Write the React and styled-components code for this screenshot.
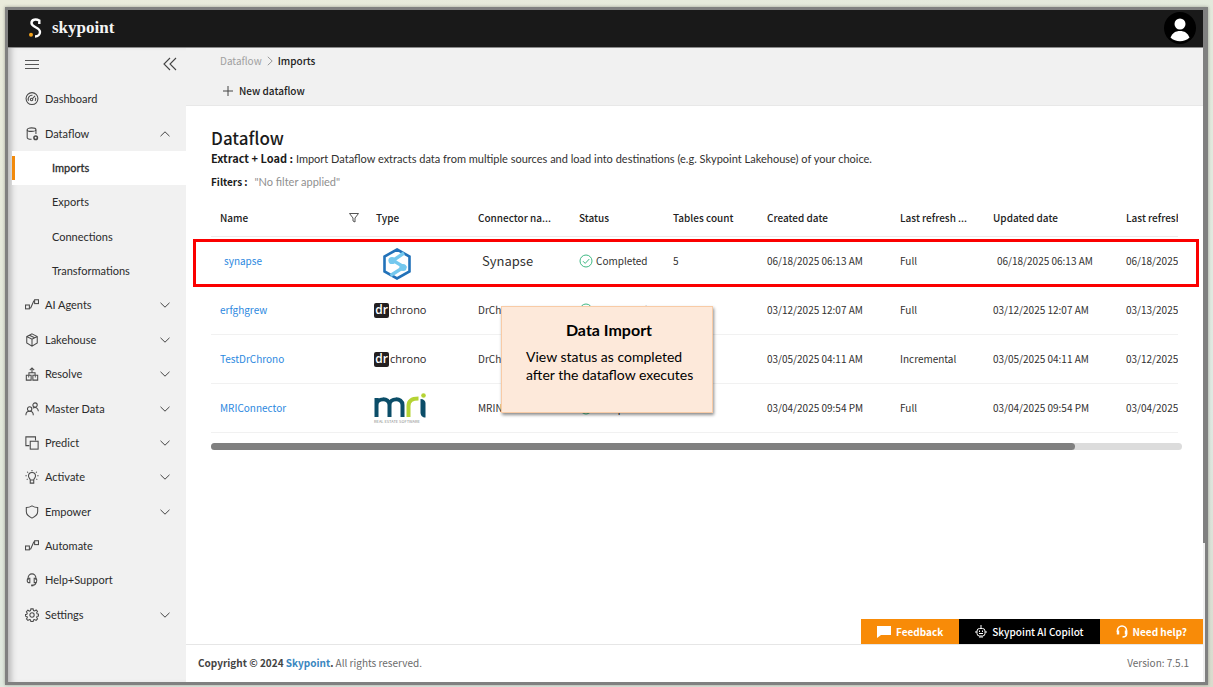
import React from "react";
import styled, { createGlobalStyle } from "styled-components";

const sans = `"Noto Sans CJK SC", "Open Sans", sans-serif`;
const humanist = `Lato, "Open Sans", sans-serif`;

const Global = createGlobalStyle`
  *, *::before, *::after { box-sizing: border-box; }
  body {
    margin: 0;
    background: linear-gradient(160deg, #eaebdb 0%, #e2e9dc 45%, #dfe9e2 75%, #d9dccd 100%);
    font-family: ${sans};
    font-size: 10px;
    line-height: 16px;
    color: #323130;
  }
  a { text-decoration: none; color: inherit; }
  button { font: inherit; color: inherit; border: 0; background: none; padding: 0; }
`;

const Page = styled.div`
  min-height: 100vh;
  display: flex;
  padding: 7px 5px 2px;
`;

const Frame = styled.div`
  flex: 1;
  min-width: 0;
  display: flex;
  flex-direction: column;
  border: 3px solid #808080;
  background: #fff;
  box-shadow: 0 0 3px rgba(90, 90, 80, 0.5);
`;

const Header = styled.header`
  display: flex;
  align-items: center;
  justify-content: space-between;
  height: 38px;
  padding: 0 7px 2px 20px;
  background: #191919;
  border-right: 2px solid #808080;
  border-bottom: 1px solid #8b8b8b;
`;

const Brand = styled.a`
  display: flex;
  align-items: center;
  gap: 10px;
  color: #f4f4f4;
  font-family: "Liberation Serif", serif;
  font-size: 17px;
  font-weight: 700;
  line-height: 24px;
`;

const Avatar = styled.button`
  width: 32px;
  height: 32px;
  border-radius: 50%;
  background: #000;
  svg { display: block; }
`;

const Body = styled.div`
  flex: 1;
  display: flex;
  min-height: 0;
`;

const Sidebar = styled.aside`
  flex: 0 0 178px;
  display: flex;
  flex-direction: column;
  padding-bottom: 50px;
  background: #f1f1f1;
  box-shadow: inset 7px 0 6px -4px #b5b5b5;
`;

const SidebarTop = styled.div`
  display: flex;
  align-items: center;
  justify-content: space-between;
  height: 34px;
  padding: 0 9px 2px 17px;
  svg { display: block; }
`;

const Nav = styled.ul`
  flex: 1;
  display: flex;
  flex-direction: column;
  margin: 0;
  padding: 0;
  list-style: none;
`;

const NavItem = styled.li`
  flex: 1;
  display: flex;
`;

const NavLink = styled.a`
  flex: 1;
  display: flex;
  align-items: center;
  gap: 6px;
  padding: 0 16px 0 ${(p) => (p.$sub ? "40px" : "13px")};
  margin-left: 4px;
  font-family: ${humanist};
  font-size: 11px;
  color: #2b2b2b;
  background: ${(p) => (p.$active ? "linear-gradient(#f28a0b, #f28a0b) 0 50% / 3px 24px no-repeat #fff" : "transparent")};
  -webkit-text-stroke: ${(p) => (p.$active ? "0.3px #2b2b2b" : "0")};
`;

const NavText = styled.span`
  flex: 1;
`;

const Content = styled.main`
  flex: 1;
  min-width: 0;
  display: flex;
  flex-direction: column;
`;

const PageRail = styled.div`
  flex: 0 0 2px;
  background: #efefef;
`;

const PageThumb = styled.div`
  height: 78%;
  background: #808080;
`;

const CommandBar = styled.div`
  display: flex;
  flex-direction: column;
  gap: 14px;
  height: 58px;
  padding: 5px 34px 0;
  background: #f1f1f1;
  border-bottom: 1px solid #e8e8e8;
`;

const Crumbs = styled.nav`
  display: flex;
  align-items: center;
  gap: 5px;
  color: #a0a0a0;
  b { color: #222; font-weight: 500; }
`;

const NewButton = styled.button`
  display: flex;
  align-items: center;
  align-self: flex-start;
  gap: 6px;
  padding-left: 3px;
  color: #222;
  font-weight: 500;
`;

const Section = styled.section`
  flex: 1;
  padding: 20px 21px 0 25px;
`;

const Title = styled.h1`
  margin: 0;
  font-size: 17px;
  font-weight: 500;
  line-height: 24px;
  color: #1b1b1b;
`;

const Line = styled.p`
  margin: 0 0 7px;
  font-family: ${humanist};
  font-size: 11px;
  b { font-family: ${sans}; font-size: ${(p) => (p.$lead ? "11px" : "10px")}; font-weight: 700; color: #1b1b1b; }
  span { margin-left: 4px; color: #8f8f8f; }
`;

const TableArea = styled.div`
  position: relative;
`;

const TableClip = styled.div`
  overflow: hidden;
  margin-right: 4px;
`;

const Table = styled.table`
  table-layout: fixed;
  width: 1087px;
  border-collapse: separate;
  border-spacing: 0;
`;

const Th = styled.th`
  height: 40px;
  padding: 2px 8px 0 9px;
  text-align: left;
  font-weight: 500;
  color: #222;
  white-space: nowrap;
  border-bottom: 1px solid #ececec;
`;

const ThInner = styled.div`
  display: flex;
  align-items: center;
  justify-content: space-between;
`;

const Td = styled.td`
  height: 49px;
  padding: 0 0 0 ${(p) => (p.$indent ? "13px" : "9px")};
  border-bottom: 1px solid #f1f1f1;
  white-space: nowrap;
  font-size: ${(p) => (p.$large ? "13px" : "10px")};
  svg { display: block; }
`;

const TypeCell = styled(Td)`
  padding: ${(p) => (p.$indent ? "5px 0 0 14px" : "0 0 0 7px")};
`;

const RowLink = styled.a`
  color: #2b88e0;
`;

const Status = styled.span`
  display: flex;
  align-items: center;
  gap: 3px;
`;

const Chrono = styled.span`
  display: flex;
  align-items: center;
  gap: 1px;
  font-family: "Open Sans", sans-serif;
  font-size: 11px;
  color: #2a2627;
`;

const ChronoMark = styled.span`
  width: 15px;
  height: 15px;
  border-radius: 2px;
  background: #231f20;
  color: #fff;
  font-size: 12px;
  font-weight: 600;
  line-height: 14px;
  text-align: center;
`;

const MriMark = styled.span`
  display: flex;
  flex-direction: column;
  font-size: 4px;
  line-height: 6px;
  color: #8a8a8a;
`;

const Track = styled.div`
  height: 7px;
  margin-top: 10px;
  border-radius: 4px;
  background: #dcdcdc;
`;

const Thumb = styled.div`
  width: 89%;
  height: 7px;
  border-radius: 4px;
  background: #808080;
`;

const Highlight = styled.div`
  position: absolute;
  top: 42px;
  left: -18px;
  right: -17px;
  height: 48px;
  border: 3px solid #fb0000;
  pointer-events: none;
`;

const Callout = styled.aside`
  position: absolute;
  top: 109px;
  left: 290px;
  width: 212px;
  height: 107px;
  padding: 14px 16px 0 24px;
  border: 1px solid #f8cba6;
  background: #fde9da;
  box-shadow: 1px 2px 3px rgba(0, 0, 0, 0.45);
  color: #000;
  font-family: Lato, sans-serif;
  font-size: 14px;
  line-height: 18px;
  h2 { margin: 0 4px 9px 0; font-size: 16px; line-height: 18px; font-weight: 700; text-align: center; }
  p { margin: 0; }
`;

const Actions = styled.div`
  display: flex;
  justify-content: flex-end;
`;

const Action = styled.button`
  display: flex;
  align-items: center;
  gap: 5px;
  height: 25px;
  padding: 0 16px;
  color: #fff;
  font-weight: ${(p) => (p.$dark ? 500 : 700)};
  background: ${(p) => (p.$dark ? "#000" : "#f88b08")};
`;

const Footer = styled.footer`
  display: flex;
  align-items: center;
  justify-content: space-between;
  height: 38px;
  padding: 0 14px 2px 12px;
  border-top: 1px solid #e6e6e6;
  color: #6b6b6b;
  b { color: #444; }
  a { color: #3a87c0; }
`;

const Svg = ({ size = 14, children, w = 1.2 }) => (
  <svg width={size} height={size} viewBox="0 0 16 16" fill="none" stroke="#4a4a4a" strokeWidth={w} aria-hidden="true">
    {children}
  </svg>
);

const flow = (
  <>
    <rect x=".6" y="8" width="4.400" height="4.400" />
    <rect x="11" y="2" width="4.400" height="4.400" />
    <path d="M5 11.500h1.500l3.500-8h1" />
  </>
);

const icons = {
  dashboard: (
    <>
      <circle cx="8" cy="7.5" r="6.8" />
      <circle cx="7.5" cy="8.6" r="1.4" />
      <path d="M8.5 7.6 11.5 4.4M4 10a4.4 4.4 0 0 1 4.6-6.2M12 6.6a4.4 4.4 0 0 1-.4 3.6" />
    </>
  ),
  data: (
    <>
      <ellipse cx="7.5" cy="3" rx="5" ry="2" />
      <path d="M2.5 3v9c0 1.2 2 2 5 2M12.5 3v5" />
      <circle cx="12.2" cy="12.2" r="2" strokeWidth="1.8" />
    </>
  ),
  flow,
  cube: <path d="M8 1 14 4v7.5L8 15l-6-3.5V4zM2 4l6 3 6-3M8 7v8M5 2.5l6 3" />,
  resolve: (
    <>
      <path d="M1.500 9.500H7V15H1.500zM9 9.500h5.500V15H9zM4.500 9.500v-3h7v3M8 6.500V1M5.500 3.500 8 1l2.500 2.500" />
      <path d="M4.200 9.500v2.500M11.800 9.500v2.500" strokeWidth="1" />
    </>
  ),
  people: (
    <>
      <circle cx="5.300" cy="8" r="2.500" />
      <path d="M1 15c0-3 2-4.500 4.300-4.500S9.500 12 9.500 15" />
      <circle cx="11.500" cy="3.500" r="2.500" />
      <path d="M9 7c3-2 6 0 6.300 3.500" />
    </>
  ),
  predict: (
    <>
      <path d="M5 11H1V1h11v4" />
      <rect x="6" y="6" width="9" height="9" />
    </>
  ),
  bulb: (
    <>
      <path d="M6 11.500c0-1.500-2-2.500-2-4.700a4 4 0 0 1 8 0c0 2.200-2 3.200-2 4.700zM6 11.500v3.500h4v-3.500" />
      <path d="M8 0v1.500M2.500 2l1 1M13.500 2l-1 1M.5 6.500H2M14 6.500h1.500M2 11l1-.7M14 11l-1-.7" />
    </>
  ),
  shield: <path d="M8 1c2 1.200 4 1.800 6.500 1.800v4.700c0 3.500-2.500 5.700-6.500 7.500-4-1.800-6.500-4-6.500-7.500V2.800C4 2.800 6 2.200 8 1z" />,
  headset: (
    <>
      <path d="M3.500 8V6a4.500 5 0 0 1 9 0v2M12.500 10.500c0 2-1 3.200-3.500 3.500" />
      <path d="M5.500 6v5H4.200C2 11 2 6 4.200 6zM10.500 6v5h1.300c2.200 0 2.200-5 0-5z" />
      <path d="M7 14.200h2.500" strokeWidth="2" />
    </>
  ),
  gear: (
    <>
      <circle cx="8" cy="8" r="2.500" />
      <path d="m6.700 1-.4 2-1.200.5-1.800-1L1.600 4.300l1 1.700-.5 1.200-1.600.300v1.800l1.700.4.5 1.200-1 1.700 1.600 1.600 1.800-1 1.200.5.4 1.800h2.600l.4-1.900 1.200-.5 1.800 1 1.600-1.700-1-1.700.5-1.200 1.700-.4V7.100l-1.700-.4-.5-1.200 1-1.600-1.600-1.600-1.800 1L9.700 2.900 9.300 1z" />
    </>
  ),
};

const Chevron = ({ up }) => (
  <svg width="10" height="6" viewBox="0 0 10 6" fill="none" stroke="#444" aria-hidden="true">
    <path d={up ? "M.5 5.200 5 .8l4.500 4.400" : "M.5.8 5 5.200 9.500.8"} />
  </svg>
);

const navItems = [
  { label: "Dashboard", icon: "dashboard" },
  { label: "Dataflow", icon: "data", open: true },
  { label: "Imports", sub: true, active: true },
  { label: "Exports", sub: true },
  { label: "Connections", sub: true },
  { label: "Transformations", sub: true },
  { label: "AI Agents", icon: "flow", more: true },
  { label: "Lakehouse", icon: "cube", more: true },
  { label: "Resolve", icon: "resolve", more: true },
  { label: "Master Data", icon: "people", more: true },
  { label: "Predict", icon: "predict", more: true },
  { label: "Activate", icon: "bulb", more: true },
  { label: "Empower", icon: "shield", more: true },
  { label: "Automate", icon: "flow" },
  { label: "Help+Support", icon: "headset" },
  { label: "Settings", icon: "gear", more: true },
];

const SynapseLogo = () => (
  <svg width="32" height="34" viewBox="0 0 32 34" role="img" aria-label="Synapse">
    <path d="M16 2.500 28.500 9.500v15L16 31.500 3.500 24.500v-15z" fill="none" stroke="#2272b9" strokeWidth="2.600" />
    <path d="M23 6 12 13.500l11 6.500L9.500 28.500" fill="none" stroke="#74c8ee" strokeWidth="3.400" />
    <circle cx="11" cy="13.500" r="3.600" fill="#74c8ee" />
    <circle cx="22" cy="20.500" r="3.600" fill="#74c8ee" />
  </svg>
);

const ChronoLogo = () => (
  <Chrono>
    <ChronoMark>dr</ChronoMark>
    chrono
  </Chrono>
);

const MriLogo = () => (
  <MriMark>
    <svg width="53" height="25" viewBox="0 0 53 25" role="img" aria-label="mri">
      <g fill="none" strokeWidth="4">
        <path d="M2.500 24V5M2.500 12c0-7 13-8 13 0v12M15.500 12c0-7 13-8 13 0v12" stroke="#0b4d68" />
        <path d="M34.500 24V13c0-6 4-7.500 10-7.500" stroke="#b5d334" />
      </g>
      <path d="M46.500 6c3 0 5 2 5 4v14.500c-3 0-5-2-5-5z" fill="#0b4d68" />
      <circle cx="49.500" cy="2.500" r="2.300" fill="#b5d334" />
    </svg>
    REAL ESTATE SOFTWARE
  </MriMark>
);

const Completed = () => (
  <Status>
    <svg width="14" height="14" viewBox="0 0 14 14" fill="none" stroke="#3fb984" aria-hidden="true">
      <circle cx="7" cy="7" r="6" />
      <path d="m4 7.200 2.200 2.200L10.300 5" />
    </svg>
    Completed
  </Status>
);

const columns = [
  ["Name", 156],
  ["Type", 102],
  ["Connector na...", 101],
  ["Status", 94],
  ["Tables count", 94],
  ["Created date", 133],
  ["Last refresh ...", 93],
  ["Updated date", 133],
  ["Last refreshed", 181],
];

const rows = [
  { name: "synapse", Logo: SynapseLogo, connector: "Synapse", count: 5, created: "06/18/2025 06:13 AM", mode: "Full", updated: "06/18/2025 06:13 AM", last: "06/18/2025 06:14 AM", fresh: true },
  { name: "erfghgrew", Logo: ChronoLogo, connector: "DrChrono", count: 4, created: "03/12/2025 12:07 AM", mode: "Full", updated: "03/12/2025 12:07 AM", last: "03/13/2025 12:07 AM" },
  { name: "TestDrChrono", Logo: ChronoLogo, connector: "DrChrono", count: 4, created: "03/05/2025 04:11 AM", mode: "Incremental", updated: "03/05/2025 04:11 AM", last: "03/12/2025 04:11 AM" },
  { name: "MRIConnector", Logo: MriLogo, connector: "MRINewconn", count: 11, created: "03/04/2025 09:54 PM", mode: "Full", updated: "03/04/2025 09:54 PM", last: "03/04/2025 09:54 PM" },
];

export default function App() {
  return (
    <Page>
      <Global />
      <Frame>
        <Header>
          <Brand href="#">
            <svg width="14" height="20" viewBox="0 0 14 20" aria-hidden="true">
              <path d="M11.300 6V2.500C8 .8 3.500 1.300 3.500 5c0 4.500 8.500 4 8.500 9 0 2.500-2 4.500-5 4.500" fill="none" stroke="#fff" strokeWidth="2.400" />
              <circle cx="3" cy="16.800" r="2" fill="#f5a41d" />
            </svg>
            skypoint
          </Brand>
          <Avatar aria-label="Account">
            <svg width="32" height="32" viewBox="0 0 32 32" fill="#fff" aria-hidden="true">
              <circle cx="16" cy="12" r="5.500" />
              <path d="M6.500 25.500c2-4.500 5-6.500 9.500-6.500s7.500 2 9.500 6.500c-5 5-14 5-19 0z" />
            </svg>
          </Avatar>
        </Header>
        <Body>
          <Sidebar>
            <SidebarTop>
              <button aria-label="Menu">
                <svg width="14" height="9" viewBox="0 0 14 9" stroke="#555" aria-hidden="true">
                  <path d="M0 .5h14M0 4.500h14M0 8.500h14" />
                </svg>
              </button>
              <button aria-label="Collapse">
                <svg width="14" height="14" viewBox="0 0 14 14" fill="none" stroke="#444" strokeWidth="1.100" aria-hidden="true">
                  <path d="M7 1 1 7l6 6M13 1 7 7l6 6" />
                </svg>
              </button>
            </SidebarTop>
            <Nav>
              {navItems.map((n) => (
                <NavItem key={n.label}>
                  <NavLink href="#" $sub={n.sub} $active={n.active}>
                    {n.icon && <Svg>{icons[n.icon]}</Svg>}
                    <NavText>{n.label}</NavText>
                    {(n.more || n.open) && <Chevron up={n.open} />}
                  </NavLink>
                </NavItem>
              ))}
            </Nav>
          </Sidebar>
          <Content>
            <CommandBar>
              <Crumbs>
                <a href="#">Dataflow</a>
                <svg width="6" height="10" viewBox="0 0 6 10" fill="none" stroke="#999" aria-hidden="true">
                  <path d="m.8.8 4.400 4.200L.8 9.200" />
                </svg>
                <b>Imports</b>
              </Crumbs>
              <NewButton>
                <svg width="10" height="10" viewBox="0 0 10 10" stroke="#444" aria-hidden="true">
                  <path d="M0 5h10M5 0v10" />
                </svg>
                New dataflow
              </NewButton>
            </CommandBar>
            <Section>
              <Title>Dataflow</Title>
              <Line $lead>
                <b>Extract + Load :</b> Import Dataflow extracts data from multiple sources and load into destinations (e.g. Skypoint Lakehouse) of your choice.
              </Line>
              <Line>
                <b>Filters :</b> <span>"No filter applied"</span>
              </Line>
              <TableArea>
                <TableClip>
                  <Table>
                    <colgroup>
                      {columns.map(([label, width]) => (
                        <col key={label} width={width} />
                      ))}
                    </colgroup>
                    <thead>
                      <tr>
                        {columns.map(([label], i) => (
                          <Th key={label}>
                            <ThInner>
                              {label}
                              {i === 0 && (
                                <svg width="10" height="10" viewBox="0 0 10 10" fill="none" stroke="#555" aria-hidden="true">
                                  <path d="M.5.500h9L6 5v4L4 8V5z" />
                                </svg>
                              )}
                            </ThInner>
                          </Th>
                        ))}
                      </tr>
                    </thead>
                    <tbody>
                      {rows.map((r) => (
                        <tr key={r.name}>
                          <Td $indent={r.fresh}><RowLink href="#">{r.name}</RowLink></Td>
                          <TypeCell $indent={r.fresh}><r.Logo /></TypeCell>
                          <Td $indent={r.fresh} $large={r.fresh}>{r.connector}</Td>
                          <Td><Completed /></Td>
                          <Td>{r.count}</Td>
                          <Td>{r.created}</Td>
                          <Td>{r.mode}</Td>
                          <Td $indent={r.fresh}>{r.updated}</Td>
                          <Td>{r.last}</Td>
                        </tr>
                      ))}
                    </tbody>
                  </Table>
                </TableClip>
                <Track><Thumb /></Track>
                <Highlight />
                <Callout>
                  <h2>Data Import</h2>
                  <p>View status as completed<br />after the dataflow executes</p>
                </Callout>
              </TableArea>
            </Section>
            <Actions>
              <Action>
                <svg width="14" height="12" viewBox="0 0 14 12" fill="#fff" aria-hidden="true">
                  <path d="M0 0h14v9H4l-4 3z" />
                </svg>
                Feedback
              </Action>
              <Action $dark>
                <svg width="12" height="13" viewBox="0 0 12 13" fill="none" stroke="#fff" aria-hidden="true">
                  <rect x="2" y="3.500" width="8" height="7.500" rx="2.500" />
                  <path d="M6 3.500V0M0 7h2M10 7h2M4 12h4M4 8.500h4" />
                  <path d="M4 6.300h1M7 6.300h1" strokeWidth="1.500" />
                </svg>
                Skypoint AI Copilot
              </Action>
              <Action>
                <svg width="12" height="13" viewBox="0 0 12 13" fill="none" stroke="#fff" strokeWidth="1.600" aria-hidden="true">
                  <path d="M1.500 7V5.500a4.500 4.500 0 0 1 9 0V9c0 2-1.500 3-4 3" />
                  <path d="M2 5.500v4M10 5.500v4" strokeWidth="2.400" />
                </svg>
                Need help?
              </Action>
            </Actions>
            <Footer>
              <span><b>Copyright © 2024 <a href="#">Skypoint</a>.</b> All rights reserved.</span>
              <span>Version: 7.5.1</span>
            </Footer>
          </Content>
          <PageRail><PageThumb /></PageRail>
        </Body>
      </Frame>
    </Page>
  );
}
